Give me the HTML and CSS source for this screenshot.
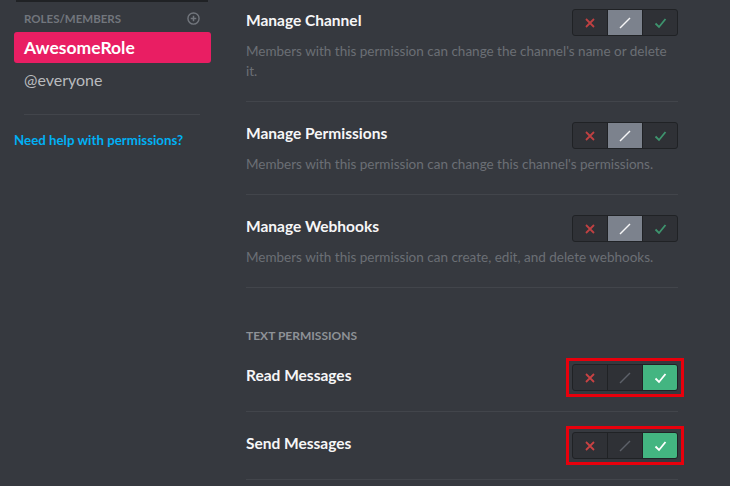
FILE: index.html
```html
<!DOCTYPE html>
<html>
  <head>
    <meta charset="utf-8">
    <title>Channel Permissions</title>
    <link rel="stylesheet" href="styles.css">
  </head>
  <body>
    <div class="layout">
      <aside class="sidebar">
        <div class="sidebar-top"></div>
        <div class="roles-header">
          <span>Roles/Members</span>
          <svg class="add-icon" width="13" height="13" viewBox="0 0 14 14">
            <circle cx="7" cy="7" r="6" fill="none" stroke="#72767d" stroke-width="1.5"/>
            <path d="M7 4v6M4 7h6" stroke="#72767d" stroke-width="1.6"/>
          </svg>
        </div>
        <div class="role selected">AwesomeRole</div>
        <div class="role">@everyone</div>
        <div class="sidebar-divider"></div>
        <a class="help-link" href="#">Need help with permissions?</a>
      </aside>

      <main class="content">
        <div class="perm first">
          <div class="perm-head">
            <div class="perm-title">Manage Channel</div>
            <div class="switch neutral">
              <span class="seg deny"><svg width="12" height="12" viewBox="0 0 12 12"><path d="M2 2l8 8M10 2l-8 8" stroke="#f04747" stroke-width="1.8"/></svg></span>
              <span class="seg pass"><svg width="14" height="14" viewBox="0 0 14 14"><path d="M2 12L12 2" stroke="#f6f6f7" stroke-width="1.4"/></svg></span>
              <span class="seg allow"><svg width="13" height="12" viewBox="0 0 13 12"><path d="M1.5 6.5l3.5 3.5 6.5-8" fill="none" stroke="#43b581" stroke-width="1.8"/></svg></span>
            </div>
          </div>
          <div class="perm-desc">Members with this permission can change the channel's name or delete it.</div>
        </div>

        <div class="perm">
          <div class="perm-head">
            <div class="perm-title">Manage Permissions</div>
            <div class="switch neutral">
              <span class="seg deny"><svg width="12" height="12" viewBox="0 0 12 12"><path d="M2 2l8 8M10 2l-8 8" stroke="#f04747" stroke-width="1.8"/></svg></span>
              <span class="seg pass"><svg width="14" height="14" viewBox="0 0 14 14"><path d="M2 12L12 2" stroke="#f6f6f7" stroke-width="1.4"/></svg></span>
              <span class="seg allow"><svg width="13" height="12" viewBox="0 0 13 12"><path d="M1.5 6.5l3.5 3.5 6.5-8" fill="none" stroke="#43b581" stroke-width="1.8"/></svg></span>
            </div>
          </div>
          <div class="perm-desc">Members with this permission can change this channel's permissions.</div>
        </div>

        <div class="perm">
          <div class="perm-head">
            <div class="perm-title">Manage Webhooks</div>
            <div class="switch neutral">
              <span class="seg deny"><svg width="12" height="12" viewBox="0 0 12 12"><path d="M2 2l8 8M10 2l-8 8" stroke="#f04747" stroke-width="1.8"/></svg></span>
              <span class="seg pass"><svg width="14" height="14" viewBox="0 0 14 14"><path d="M2 12L12 2" stroke="#f6f6f7" stroke-width="1.4"/></svg></span>
              <span class="seg allow"><svg width="13" height="12" viewBox="0 0 13 12"><path d="M1.5 6.5l3.5 3.5 6.5-8" fill="none" stroke="#43b581" stroke-width="1.8"/></svg></span>
            </div>
          </div>
          <div class="perm-desc">Members with this permission can create, edit, and delete webhooks.</div>
        </div>

        <h5 class="section-title">Text Permissions</h5>

        <div class="perm">
          <div class="perm-head">
            <div class="perm-title">Read Messages</div>
            <div class="highlight">
              <div class="switch allowed">
                <span class="seg deny"><svg width="12" height="12" viewBox="0 0 12 12"><path d="M2 2l8 8M10 2l-8 8" stroke="#f04747" stroke-width="1.8"/></svg></span>
                <span class="seg pass"><svg width="14" height="14" viewBox="0 0 14 14"><path d="M2 12L12 2" stroke="#5d6169" stroke-width="1.4"/></svg></span>
                <span class="seg allow"><svg width="13" height="12" viewBox="0 0 13 12"><path d="M1.5 6.5l3.5 3.5 6.5-8" fill="none" stroke="#fff" stroke-width="1.8"/></svg></span>
              </div>
            </div>
          </div>
        </div>

        <div class="perm">
          <div class="perm-head">
            <div class="perm-title">Send Messages</div>
            <div class="highlight">
              <div class="switch allowed">
                <span class="seg deny"><svg width="12" height="12" viewBox="0 0 12 12"><path d="M2 2l8 8M10 2l-8 8" stroke="#f04747" stroke-width="1.8"/></svg></span>
                <span class="seg pass"><svg width="14" height="14" viewBox="0 0 14 14"><path d="M2 12L12 2" stroke="#5d6169" stroke-width="1.4"/></svg></span>
                <span class="seg allow"><svg width="13" height="12" viewBox="0 0 13 12"><path d="M1.5 6.5l3.5 3.5 6.5-8" fill="none" stroke="#fff" stroke-width="1.8"/></svg></span>
              </div>
            </div>
          </div>
        </div>
      </main>
    </div>
  </body>
</html>
```

FILE: styles.css
```css
html, body {
  margin: 0;
  height: 100%;
  overflow: hidden;
  background-color: #36393f;
  font-family: Lato, "Noto Sans", sans-serif;
}
.layout {
  display: flex;
  height: 100%;
}
.sidebar {
  width: 230px;
  flex-shrink: 0;
  padding: 0 19px 0 14px;
  box-sizing: border-box;
}
.sidebar-top {
  height: 2px;
  margin: 0 3px 0 2px;
  background-color: #202225;
}
.roles-header {
  display: flex;
  align-items: center;
  justify-content: space-between;
  padding: 8px 11px 0 10px;
  height: 16px;
  margin-bottom: 6px;
  font-size: 11.5px;
  font-weight: 700;
  text-transform: uppercase;
  color: #72767d;
}
.role {
  height: 31px;
  line-height: 31px;
  padding-left: 10px;
  border-radius: 3px;
  font-size: 16px;
  color: #b9bbbe;
  margin-bottom: 1px;
}
.role.selected {
  background-color: #e91e63;
  color: #fff;
  font-size: 17.5px;
  font-weight: 700;
}
.sidebar-divider {
  height: 1px;
  margin: 19px 11px 0 10px;
  background-color: #42454b;
}
.help-link {
  display: block;
  margin-top: 17px;
  font-size: 13.3px;
  font-weight: 700;
  color: #00b0f4;
  text-decoration: none;
}
.content {
  margin-left: 16px;
  width: 432px;
}
.perm {
  padding: 20px 0;
  border-bottom: 1px solid #42454b;
}
.perm.first {
  padding-top: 9px;
}
.perm-head {
  display: flex;
  align-items: flex-start;
  justify-content: space-between;
}
.perm-title {
  font-size: 15.5px;
  line-height: 22px;
  font-weight: 700;
  color: #f6f6f7;
}
.perm-desc {
  margin-top: 5px;
  font-size: 13.5px;
  line-height: 20px;
  color: #6b6f75;
}
.section-title {
  margin: 40px 0 0;
  height: 16px;
  line-height: 16px;
  font-size: 12px;
  font-weight: 700;
  text-transform: uppercase;
  color: #8e9297;
}
.highlight {
  border: 3px solid #e8000c;
  padding: 3px;
  margin: -6px -6px -6px 0;
}
.switch {
  display: flex;
  height: 27px;
  border: 1px solid #202225;
  border-radius: 3px;
  box-sizing: border-box;
  background-color: #2f3136;
}
.seg {
  width: 34px;
  display: flex;
  align-items: center;
  justify-content: center;
}
.seg + .seg {
  border-left: 1px solid #202225;
}
.switch.neutral .pass {
  background-color: #7c828d;
}
.switch.neutral .deny svg, .switch.neutral .allow svg {
  opacity: 0.75;
}
.switch.allowed .allow {
  background-color: #43b581;
  border-radius: 0 2px 2px 0;
}
.switch.allowed .deny svg {
  opacity: 0.8;
}
```
